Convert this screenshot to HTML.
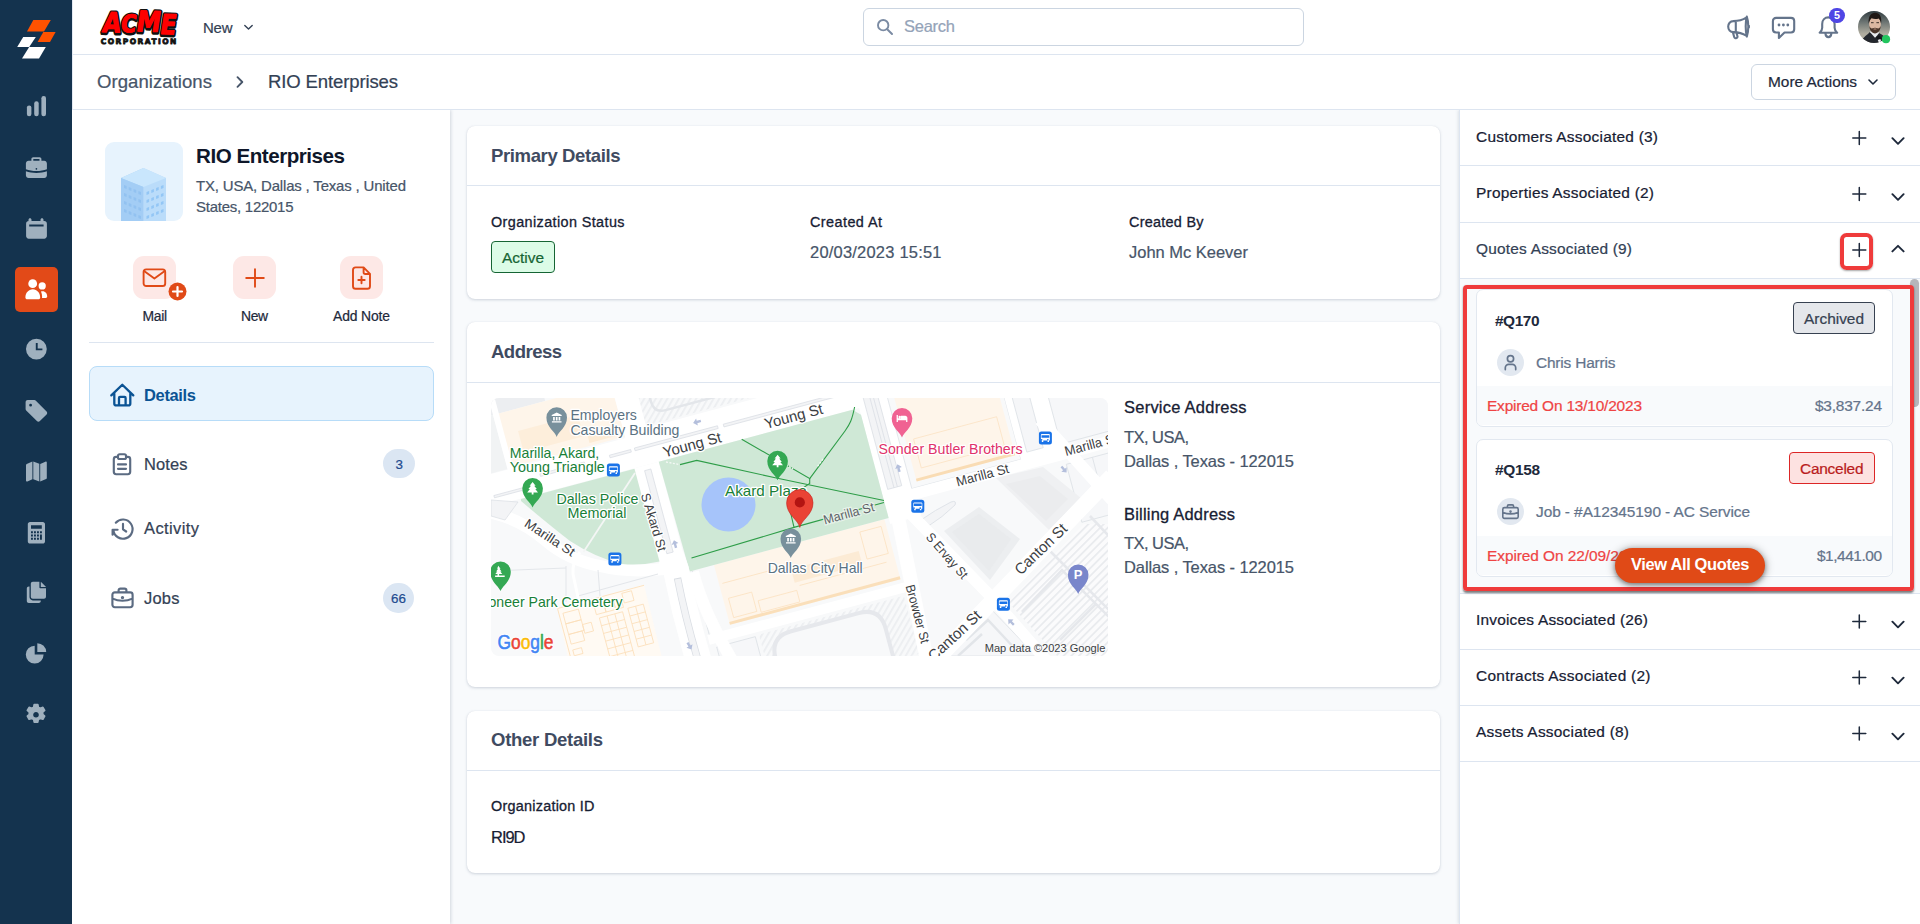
<!DOCTYPE html>
<html lang="en"><head><meta charset="utf-8"><title>RIO Enterprises - Organizations</title>
<style>
*{box-sizing:border-box;margin:0;padding:0}
html,body{width:1920px;height:924px;overflow:hidden;background:#fff}
body{font-family:"Liberation Sans",sans-serif;color:#1e293b;position:relative}
.a{position:absolute}
.t{position:absolute;white-space:nowrap;line-height:1}
svg{display:block;overflow:visible}
.card{background:#fff;border-radius:8px;box-shadow:0 1px 3px rgba(100,116,139,.28),0 0 1px rgba(100,116,139,.15)}
.qc{background:#fff;border:1px solid #e2e8f0;border-radius:7px;overflow:hidden}
.qf{position:absolute;left:0;width:100%;background:#f8fafc}
</style></head>
<body>
<!-- page backgrounds -->
<div class="a" style="left:72px;top:110px;width:1848px;height:814px;background:#f8fafc"></div>
<!-- header -->
<!-- left panel -->
<div class="a" style="left:72px;top:110px;width:378px;height:814px;background:#fff;box-shadow:1px 0 3px rgba(100,116,139,.25)"></div>
<!-- right panel -->
<div class="a" style="left:1459px;top:110px;width:461px;height:814px;background:#fff;border-left:1px solid #dde5f0;box-shadow:-1px 0 3px rgba(100,116,139,.18)"></div>
<!-- header bars (after panels so shadows do not bleed) -->
<div class="a" style="left:72px;top:0;width:1848px;height:55px;background:#fff;border-bottom:1px solid #dde5f0"></div>
<div class="a" style="left:72px;top:55px;width:1848px;height:55px;background:#fff;border-bottom:1px solid #dde5f0"></div>
<!-- sidebar -->
<div class="a" style="left:0;top:0;width:72px;height:924px;background:#14334e"></div>
<!-- centre cards -->
<div class="a card" style="left:467px;top:126px;width:973px;height:173px"></div>
<div class="a" style="left:467px;top:185px;width:973px;height:1px;background:#dde5f0"></div>
<div class="a card" style="left:467px;top:322px;width:973px;height:365px"></div>
<div class="a" style="left:467px;top:382px;width:973px;height:1px;background:#dde5f0"></div>
<div class="a card" style="left:467px;top:711px;width:973px;height:162px"></div>
<div class="a" style="left:467px;top:770px;width:973px;height:1px;background:#dde5f0"></div>
<div class="a" style="left:72px;top:0;width:1px;height:110px;background:#e3e9f2"></div>
<!-- sidebar icons -->
<svg class="a" style="left:0;top:0" width="72" height="924" viewBox="0 0 72 924">
 <!-- logo -->
 <polygon points="33.3,20 50.8,20 44,31.4 27,31.4" fill="#ff5200"/>
 <polygon points="43.3,32 55.6,32 50,42 37.6,42" fill="#ff5200"/>
 <polygon points="23.2,37 35.8,37 29.2,47 17.2,47" fill="#fff"/>
 <polygon points="29.2,47 45.8,47 39,58.6 22,58.6" fill="#fff"/>
 <g fill="#9fb0be">
  <!-- bars -->
  <rect x="26.9" y="105.4" width="4.5" height="10.8" rx="2.2"/>
  <rect x="34.2" y="101.2" width="4.5" height="15" rx="2.2"/>
  <rect x="41.4" y="96" width="4.6" height="20.2" rx="2.2"/>
  <!-- briefcase -->
  <path d="M31.400 161.200v-2.200c0-1 .800-1.800 1.800-1.800h6.400c1 0 1.800.800 1.800 1.800v2.200h-1.900v-1.800c0-.200-.100-.300-.300-.300h-5.600c-.200 0-.300.100-.300.300v1.800z"/>
  <path d="M28.600 160.800h15.600c1.500 0 2.700 1.200 2.700 2.700v5.800c-3 1.200-6.700 1.800-10.500 1.800s-7.500-.600-10.500-1.800v-5.800c0-1.500 1.200-2.700 2.700-2.700zm7.800 7.200a.85.85 0 1 0 0 1.700.85.85 0 0 0 0-1.700z" fill-rule="evenodd"/>
  <path d="M25.900 171.300c3.100 1.100 6.700 1.700 10.500 1.700s7.400-.600 10.500-1.700v4c0 1.500-1.200 2.700-2.700 2.700H28.600c-1.500 0-2.700-1.200-2.700-2.700z"/>
  <!-- calendar -->
  <path d="M30 218.300c.800 0 1.500.700 1.500 1.500v1.300h9v-1.300c0-.800.700-1.500 1.500-1.500s1.500.700 1.500 1.500v1.300h.800c1.500 0 2.600 1.200 2.600 2.600v12.400c0 1.500-1.200 2.600-2.600 2.600H28.700c-1.500 0-2.600-1.200-2.600-2.600v-12.400c0-1.500 1.200-2.600 2.600-2.600h-.200v-1.300c0-.800.700-1.500 1.500-1.500zM29.200 224.600v2h14.400v-2z" fill-rule="evenodd"/>
 </g>
 <!-- active -->
 <rect x="15" y="267" width="43" height="45" rx="5" fill="#e24a18"/>
 <g fill="#fff">
  <circle cx="32.700" cy="283.700" r="4.400"/>
  <path d="M25.400 297.500c0-4.600 3.200-8.200 7.400-8.200s7.400 3.600 7.400 8.200c0 1-.8 1.800-1.800 1.800H27.200c-1 0-1.800-.8-1.800-1.800z"/>
  <circle cx="42.200" cy="285.900" r="3.600"/>
  <path d="M41 291.500c.5-.2 1.100-.3 1.700-.3 2.600 0 4.500 2.400 4.500 5.400 0 .8-.6 1.400-1.400 1.400h-3.800c.1-.4.100-.8.100-1.200 0-2-.4-3.800-1.100-5.300z"/>
 </g>
 <g fill="#9fb0be">
  <!-- clock -->
  <path d="M36.400 338.700a10.400 10.400 0 1 0 0 20.800 10.400 10.400 0 0 0 0-20.800zm-.600 4.300h1.900v5.400h4.700v1.900h-6.600z" fill-rule="evenodd"/>
  <!-- tag -->
  <path d="M25.600 402.200c0-1.200 1-2.100 2.100-2.100h6.700c.600 0 1.100.200 1.500.600l10.700 10.700c.800.800.800 2.200 0 3l-6.700 6.700c-.800.800-2.200.800-3 0l-10.700-10.700c-.400-.400-.600-.900-.600-1.500zm5 1.600a1.400 1.400 0 1 0 0 2.800 1.400 1.400 0 0 0 0-2.800z" fill-rule="evenodd"/>
  <!-- map -->
  <path d="M26 465.200c0-.500.300-.900.700-1.100l5.700-2.500v17.600l-5 2.200c-.700.300-1.400-.200-1.400-.900zM33.300 461.500l6 2.300v17.800l-6-2.300zM40.200 464l5.200-2.300c.700-.300 1.400.200 1.400.900v15.300c0 .500-.300.900-.700 1.100l-5.900 2.600z"/>
  <!-- calculator -->
  <path d="M30 522h12.800c1.200 0 2.200 1 2.200 2.200v17.200c0 1.200-1 2.200-2.200 2.200H30c-1.200 0-2.200-1-2.200-2.200v-17.200c0-1.200 1-2.200 2.200-2.200zm1 3.200v3.600h10.800v-3.600zM31 531.300v1.900h1.900v-1.900zm3 0v1.900h1.900v-1.900zm3 0v1.900h1.900v-1.900zm3 0v1.900h1.900v-1.900zM31 534.500v1.900h1.900v-1.900zm3 0v1.900h1.900v-1.900zm3 0v1.900h1.900v-1.900zm3 0v5.200h1.900v-5.200zM31 537.800v1.900h1.900v-1.900zm3 0v1.900h1.900v-1.900zm3 0v1.900h1.900v-1.900z" fill-rule="evenodd"/>
  <!-- copy -->
  <path d="M32.800 581.800h6.600v5.400c0 .600.500 1.100 1.100 1.100h5.500v8.400c0 1.100-.900 2-2 2H32.800c-1.100 0-2-.900-2-2v-12.900c0-1.100.900-2 2-2zM40.800 581.900c.200.100.400.200.600.400l4.200 4.200c.200.200.300.400.400.600h-5.200z"/>
  <path d="M26.800 588.400c0-1.100.900-2 2-2h.700v10.700c0 1.800 1.500 3.300 3.300 3.300h8v.700c0 1.100-.900 2-2 2h-10c-1.100 0-2-.900-2-2z"/>
  <!-- pie -->
  <path d="M34.700 645.700a8.900 8.900 0 1 0 8.900 8.900h-8.900z"/>
  <path d="M37.300 643.200a8.900 8.900 0 0 1 8.900 8.900h-8.900z"/>
  <!-- gear -->
  <path d="M34.200 704.500h3.600l.6 2.700c.7.200 1.300.6 1.900 1l2.600-.9 1.800 3.100-2 1.800c.1.700.1 1.500 0 2.200l2 1.800-1.800 3.100-2.600-.9c-.600.400-1.200.8-1.900 1l-.6 2.700h-3.600l-.6-2.700c-.7-.2-1.300-.600-1.900-1l-2.600.9-1.800-3.100 2-1.800c-.1-.700-.1-1.500 0-2.200l-2-1.800 1.800-3.100 2.600.9c.6-.4 1.200-.8 1.900-1zm1.800 6.600a3.600 3.600 0 1 0 0 7.200 3.600 3.600 0 0 0 0-7.200z" fill-rule="evenodd" stroke="#9fb0be" stroke-width="1.6" stroke-linejoin="round"/>
 </g>
</svg>
<!-- ACME logo -->
<svg class="a" style="left:96px;top:6px" width="86" height="42" viewBox="0 0 86 42">
 <g font-family="'DejaVu Sans','Liberation Sans',sans-serif" font-weight="700">
  <g transform="translate(2.500,25.800) skewX(-7) rotate(1.600)">
   <text x="3.600" y="1" font-size="27.600" fill="#111" stroke="#111" stroke-width="4" stroke-linejoin="round" textLength="74" lengthAdjust="spacingAndGlyphs"><tspan>A</tspan><tspan font-size="24.500" dy="-.5">C</tspan><tspan font-size="28.500" dy="-1.200">M</tspan><tspan dy="2.200">E</tspan></text>
   <text x="3" y="0" font-size="27.600" fill="#f00" stroke="#111" stroke-width="3.200" stroke-linejoin="round" paint-order="stroke" textLength="74" lengthAdjust="spacingAndGlyphs"><tspan>A</tspan><tspan font-size="24.500" dy="-.5">C</tspan><tspan font-size="28.500" dy="-1.200">M</tspan><tspan dy="2.200">E</tspan></text>
   <text x="3" y="0" font-size="27.600" fill="#f00" stroke="#f00" stroke-width=".9" stroke-linejoin="round" textLength="74" lengthAdjust="spacingAndGlyphs"><tspan>A</tspan><tspan font-size="24.500" dy="-.5">C</tspan><tspan font-size="28.500" dy="-1.200">M</tspan><tspan dy="2.200">E</tspan></text>
  </g>
  <text x="4.800" y="37.800" font-size="7.500" fill="#111" stroke="#111" stroke-width=".8" stroke-linejoin="round" textLength="75.500" lengthAdjust="spacing">CORPORATION</text>
 </g>
</svg>
<!-- New chevron -->
<svg class="a" style="left:243px;top:23px" width="11" height="9" viewBox="0 0 11 9"><path d="M1.800 2.500l3.700 3.600 3.700-3.600" fill="none" stroke="#334155" stroke-width="1.400" stroke-linecap="round" stroke-linejoin="round"/></svg>
<!-- search -->
<div class="a" style="left:863px;top:8px;width:441px;height:38px;border:1px solid #cbd5e1;border-radius:6px;background:#fff"></div>
<svg class="a" style="left:876px;top:18px" width="18" height="18" viewBox="0 0 18 18"><circle cx="7.200" cy="7.200" r="5.200" fill="none" stroke="#7b8ba3" stroke-width="1.900"/><path d="M11.200 11.200l4.800 4.800" stroke="#7b8ba3" stroke-width="2" stroke-linecap="round"/></svg>
<!-- right icons -->
<svg class="a" style="left:1724px;top:12px" width="30" height="30" viewBox="0 0 30 30" fill="none" stroke="#64748b" stroke-width="2.100" stroke-linecap="round" stroke-linejoin="round">
 <path d="M9.400 9.100C6.200 9.100 4.200 11.600 4.200 14.600S6.200 20.100 9.400 20.100M9.400 9.100C13.800 9 18.600 7.900 22.300 5.600M9.400 20.100C13.800 20.200 18.600 21.300 22.300 23.600M22.800 4.600c1 2.800 1.500 6.200 1.500 10s-.5 7.200-1.500 10c-.7-2.800-1.100-6.200-1.100-10s.4-7.200 1.100-10zM11.800 9.300v10.800M8.900 20.400l1.300 4.600c.3 1 1.300 1.500 2.200 1.100.9-.4 1.300-1.300 1-2.200l-.9-3M24.900 13.700v1.800"/>
</svg>
<svg class="a" style="left:1769px;top:13px" width="30" height="28" viewBox="0 0 30 28" fill="none" stroke="#64748b" stroke-width="2.100" stroke-linecap="round" stroke-linejoin="round">
 <path d="M7.100 4.900h14.900c1.800 0 3.200 1.400 3.200 3.200v8.200c0 1.800-1.400 3.200-3.200 3.200h-6.500l-5.600 5.400v-5.400H7.100c-1.800 0-3.200-1.400-3.200-3.200V8.100c0-1.800 1.400-3.200 3.200-3.200z"/>
 <g stroke="none" fill="#64748b"><circle cx="10" cy="12" r="1.400"/><circle cx="14.400" cy="12" r="1.400"/><circle cx="18.800" cy="12" r="1.400"/></g>
</svg>
<svg class="a" style="left:1815px;top:13px" width="28" height="28" viewBox="0 0 28 28" fill="none" stroke="#64748b" stroke-width="2.100" stroke-linecap="round" stroke-linejoin="round">
 <path d="M13.400 4.400c-3.600 0-6.200 2.800-6.200 6.600v3.800c0 2-1 3.600-2.600 4.900h17.600c-1.600-1.300-2.600-2.900-2.600-4.900v-3.800c0-3.800-2.600-6.600-6.200-6.600zM10.400 20.300c.2 2.200 1.400 3.800 3 3.800s2.800-1.600 3-3.800"/>
</svg>
<div class="a" style="left:1829.200px;top:7.750px;width:15.400px;height:15.400px;border-radius:50%;background:#4f46e5"></div>
<!-- avatar -->
<svg class="a" style="left:1858px;top:10.800px" width="34" height="34" viewBox="0 0 34 34">
 <defs><clipPath id="avc"><circle cx="16" cy="16" r="16"/></clipPath>
 <linearGradient id="avg" x1="0" y1="0" x2="0" y2="1"><stop offset="0" stop-color="#2f3b3f"/><stop offset=".35" stop-color="#6d7573"/><stop offset=".7" stop-color="#aeab9e"/><stop offset="1" stop-color="#b9b5a8"/></linearGradient></defs>
 <g clip-path="url(#avc)">
  <rect width="32" height="32" fill="url(#avg)"/>
  <path d="M3.500 29.500c2.500-3.500 6-5.800 8.400-8.400l5.300 3.400 3.800-2.400c3.600 2 7.500 4.600 9.500 8.400l-4 4H6z" fill="#24272d"/>
  <path d="M11.900 21.100l5.300 5.900 3.800-4.900-1.400-2.400h-6z" fill="#e9ecef"/>
  <path d="M17.200 26.500l3.800-2.200 3.600 3.600-3.200 1.200z" fill="#15171b"/>
  <path d="M19.800 29l2.600-1 1 3.500h-2.600z" fill="#eef0f2"/>
  <ellipse cx="17" cy="13" rx="5.900" ry="7.800" fill="#dcb8a2"/>
  <path d="M10.700 12.800c-.8-7.400 2.300-11 6.500-11s6.900 3.600 5.900 11c-.6-2.600-1.200-4.400-2.400-5.400-2 .8-5 .8-7.200-.2-1.300 1-2.200 3-2.800 5.600z" fill="#1f1815"/>
  <path d="M11.400 14.800c.1 4.800 2.600 7.600 5.600 7.600s5.600-2.800 5.700-7.600c-.7 1.800-1.500 2.600-2.600 2.800-.9-.7-2-.9-3.100-.9s-2.200.2-3.100.9c-1.100-.2-1.800-1-2.500-2.800z" fill="#4a362b"/>
  <path d="M15.200 17.900c.5-.4 1.100-.5 1.800-.5s1.300.1 1.800.5c-.4.500-1 .7-1.800.7s-1.400-.2-1.800-.7z" fill="#b88d7c"/>
  <path d="M13 11.700h2.600M18.400 11.700H21" stroke="#2a211d" stroke-width=".9"/>
 </g>
 <circle cx="28" cy="28.200" r="4.100" fill="#22c55e"/>
</svg>
<!-- breadcrumb chevron -->
<svg class="a" style="left:233px;top:74px" width="14" height="16" viewBox="0 0 14 16"><path d="M4.500 3.200l4.800 4.800-4.800 4.800" fill="none" stroke="#475569" stroke-width="1.900" stroke-linecap="round" stroke-linejoin="round"/></svg>
<!-- more actions -->
<div class="a" style="left:1751px;top:64px;width:145px;height:36px;border:1px solid #cbd5e1;border-radius:6px;background:#fff"></div>
<svg class="a" style="left:1866px;top:77px" width="14" height="10" viewBox="0 0 14 10"><path d="M3 3l4 4 4-4" fill="none" stroke="#1e293b" stroke-width="1.600" stroke-linecap="round" stroke-linejoin="round"/></svg>
<!-- org avatar -->
<svg class="a" style="left:105px;top:142px" width="78" height="79" viewBox="0 0 78 79">
 <defs><clipPath id="oac"><rect width="78" height="79" rx="9"/></clipPath></defs>
 <g clip-path="url(#oac)">
  <rect width="78" height="79" fill="#e7f3fd"/>
  <polygon points="16,36 38.500,26 38.500,80 16,80" fill="#a9d2f7"/>
  <polygon points="38.500,26 61,36 61,80 38.500,80" fill="#badcfa"/>
  <polygon points="16,36 38.500,26 61,36 38.500,45" fill="#c9e6fd"/>
  <polygon points="16,36 38.500,45 38.500,80 16,80" fill="#a3cdf5"/>
  <g fill="#8fc0f0" opacity=".85">
   <path d="M19 43l2.600 1v3l-2.600-1zM23.800 45l2.600 1v3l-2.600-1zM28.600 47l2.600 1v3l-2.600-1zM33.400 49l2.600 1v3l-2.600-1zM19 51l2.600 1v3l-2.600-1zM23.800 53l2.600 1v3l-2.600-1zM28.600 55l2.600 1v3l-2.600-1zM33.400 57l2.600 1v3l-2.600-1zM19 59l2.600 1v3l-2.600-1zM23.800 61l2.600 1v3l-2.600-1zM28.600 63l2.600 1v3l-2.600-1zM33.400 65l2.600 1v3l-2.600-1zM19 67l2.600 1v3l-2.600-1zM23.800 69l2.600 1v3l-2.600-1zM28.600 71l2.600 1v3l-2.600-1zM33.400 73l2.600 1v3l-2.600-1z"/>
  </g>
  <g fill="#93c6f5">
   <path d="M41.500 50l2.600-1v3l-2.600 1zM46.300 48l2.600-1v3l-2.600 1zM51.100 46l2.600-1v3l-2.600 1zM55.900 44l2.600-1v3l-2.600 1zM41.500 58l2.600-1v3l-2.600 1zM46.300 56l2.600-1v3l-2.600 1zM51.100 54l2.600-1v3l-2.600 1zM55.900 52l2.600-1v3l-2.600 1zM41.500 66l2.600-1v3l-2.600 1zM46.300 64l2.600-1v3l-2.600 1zM51.100 62l2.600-1v3l-2.600 1zM55.900 60l2.600-1v3l-2.600 1zM41.500 74l2.600-1v3l-2.600 1zM46.300 72l2.600-1v3l-2.600 1zM51.100 70l2.600-1v3l-2.600 1zM55.900 68l2.600-1v3l-2.600 1z"/>
  </g>
 </g>
</svg>
<!-- action buttons -->
<div class="a" style="left:133px;top:256px;width:43px;height:43px;border-radius:11px;background:#fde8e6"></div>
<div class="a" style="left:233px;top:256px;width:43px;height:43px;border-radius:11px;background:#fde8e6"></div>
<div class="a" style="left:340px;top:256px;width:43px;height:43px;border-radius:11px;background:#fde8e6"></div>
<svg class="a" style="left:142px;top:267px" width="26" height="22" viewBox="0 0 26 22" fill="none" stroke="#e04a17" stroke-width="1.900" stroke-linecap="round" stroke-linejoin="round">
 <rect x="1.600" y="2.400" width="21.600" height="16.600" rx="2.600"/><path d="M2.400 4.200l10 7.400 10-7.400"/>
</svg>
<svg class="a" style="left:167.600px;top:282.100px" width="19" height="19" viewBox="0 0 19 19"><circle cx="9.500" cy="9.500" r="9" fill="#e04a17"/><path d="M9.500 5v9M5 9.500h9" stroke="#fff" stroke-width="2.200" stroke-linecap="round"/></svg>
<svg class="a" style="left:244px;top:267px" width="22" height="22" viewBox="0 0 22 22"><path d="M11 2.200v17.600M2.200 11h17.600" stroke="#e04a17" stroke-width="1.900" stroke-linecap="round"/></svg>
<svg class="a" style="left:350px;top:265px" width="24" height="26" viewBox="0 0 24 26" fill="none" stroke="#e04a17" stroke-width="1.900" stroke-linecap="round" stroke-linejoin="round">
 <path d="M5.600 2.400h8l6.400 6.400v12.400c0 1.400-1.200 2.600-2.600 2.600H5.600c-1.400 0-2.600-1.200-2.600-2.600V5c0-1.400 1.200-2.600 2.600-2.600zM13.600 2.600v4.600c0 1 .800 1.800 1.800 1.800h4.400M11.500 11.800v6.400M8.300 15h6.400"/>
</svg>
<div class="a" style="left:89px;top:342px;width:345px;height:1px;background:#dde5f0"></div>
<!-- details tab -->
<div class="a" style="left:89px;top:366px;width:345px;height:55px;border-radius:8px;background:#e7f3fd;border:1px solid #b7dcf8"></div>
<svg class="a" style="left:110.300px;top:383px" width="25" height="24" viewBox="0 0 25 24" fill="none" stroke="#0b5394" stroke-width="2.300" stroke-linecap="round" stroke-linejoin="round">
 <path d="M1.300 12.400L12.300 1.700l11 10.700M4.300 10.200v10.200c0 1.100.9 2 2 2h12c1.100 0 2-.9 2-2V10.200M9 22.200v-7.300c0-.6.500-1 1-1h4.600c.6 0 1 .5 1 1v7.300"/>
</svg>
<!-- notes -->
<svg class="a" style="left:110px;top:452px" width="24" height="25" viewBox="0 0 24 25" fill="none" stroke="#5b6b82" stroke-width="2.150" stroke-linecap="round" stroke-linejoin="round">
 <path d="M8 4.800H6.200c-1.300 0-2.400 1.100-2.400 2.400v12.600c0 1.300 1.100 2.400 2.400 2.400h11.600c1.300 0 2.400-1.100 2.400-2.400V7.200c0-1.300-1.100-2.400-2.400-2.400H16M9.600 2.200h4.800c.900 0 1.600.700 1.600 1.600v1.600c0 .900-.700 1.600-1.600 1.600H9.600C8.700 7 8 6.300 8 5.400V3.800c0-.900.700-1.600 1.600-1.600zM8 12.400h8M8 16.800h8"/>
</svg>
<div class="a" style="left:383px;top:449px;width:32px;height:29px;border-radius:15px;background:#dbe6f3"></div>
<!-- activity -->
<svg class="a" style="left:110.200px;top:517.400px" width="25" height="25" viewBox="0 0 25 25" fill="none" stroke="#5b6b82" stroke-width="2.150" stroke-linecap="round" stroke-linejoin="round">
 <path d="M3.400 13.600a9.600 9.600 0 1 0 2.400-7.400M2.600 18.200v-5h5M13 7.400v5.400l3.200 2.200" transform="translate(0,-.5)"/>
</svg>
<!-- jobs -->
<svg class="a" style="left:110px;top:586px" width="25" height="24" viewBox="0 0 25 24" fill="none" stroke="#5b6b82" stroke-width="2.150" stroke-linecap="round" stroke-linejoin="round">
 <path d="M4.800 6.400h15.400c1.300 0 2.400 1.100 2.400 2.400v10c0 1.300-1.100 2.400-2.400 2.400H4.800c-1.300 0-2.400-1.100-2.400-2.400v-10c0-1.300 1.100-2.400 2.400-2.400zM8.600 6.200V4.400c0-1 .800-1.800 1.800-1.800h4.200c1 0 1.800.800 1.800 1.800v1.800M2.600 12.600c3 1.400 6.400 2.100 9.900 2.100s6.900-.700 9.900-2.100"/>
 <circle cx="12.500" cy="11.600" r=".6" fill="#5b6b82"/>
</svg>
<div class="a" style="left:383px;top:583px;width:31px;height:30px;border-radius:15px;background:#dbe6f3"></div>
<!-- active badge -->
<div class="a" style="left:491px;top:241px;width:64px;height:32px;border-radius:4px;background:#dcfce7;border:1px solid #166534"></div>
<!-- map -->
<svg class="a" style="left:491px;top:398px" width="617" height="258" viewBox="491 398 617 258" font-family="'Liberation Sans',sans-serif">
 <defs>
  <clipPath id="mclip"><rect x="491" y="398" width="617" height="258" rx="8"/></clipPath>
  <pattern id="hat" width="5" height="5" patternUnits="userSpaceOnUse" patternTransform="rotate(45)"><rect width="5" height="5" fill="#f8f9fa"/><rect width="1.800" height="5" fill="#eceef1"/></pattern>
  <pattern id="hat2" width="5.400" height="5.400" patternUnits="userSpaceOnUse" patternTransform="rotate(-45)"><rect width="5.400" height="5.400" fill="#fbfbfc"/><rect width="5.400" height="1.700" fill="#e9ebee"/></pattern>
  <g id="bus"><rect x="-6.500" y="-6.500" width="13" height="13" rx="2.500" fill="#1a73e8"/><path d="M-3.600-3.900h7.200c.500 0 .900.400.900.900v5.400h-9v-5.400c0-.500.400-.900.900-.900zm-.300 1.200v2.500h7.800v-2.500zm.100 3.700a.8.800 0 1 0 .100 1.600.8.800 0 0 0-.100-1.600zm6.200 0a.8.800 0 1 0 .100 1.600.8.800 0 0 0-.100-1.600zM-3.600 2.400h1.500v1.500h-1.500zm5.700 0h1.500v1.500h-1.500z" fill="#fff" fill-rule="evenodd"/></g>
  <path id="pin" d="M0 19.300C-1.500 14.500-10.300 9.600-10.300 0A10.300 10.300 0 0 1 10.300 0C10.300 9.600 1.500 14.500 0 19.300z"/>
 </defs>
 <g clip-path="url(#mclip)">
  <rect x="491" y="398" width="617" height="258" fill="#f8f9fa"/>
  <!-- grid-aligned layer -->
  <g transform="translate(658.750,461.700) rotate(-15)">
   <!-- blocks -->
   <rect x="-200" y="-140" width="106" height="52" fill="#eceef1"/>
   <rect x="-143" y="-88" width="117" height="55" fill="#fef5ea"/>
   <rect x="-128" y="-66" width="62" height="22" fill="#fdeedb"/>
   <rect x="-62" y="-45" width="32" height="9" fill="#fcebd5"/>
   <rect x="-200" y="-88" width="52" height="56" fill="#f1f3f4"/>
   <rect x="-3" y="-150" width="160" height="112" fill="url(#hat)"/>
   <path d="M8-120v60q0 12 12 12h140" fill="none" stroke="#e3e6ea" stroke-width="2.500"/>
   <!-- roads -->
   <rect x="-400" y="-31.500" width="1100" height="31.500" fill="#fff"/><rect x="-26" y="-36" width="700" height="6" fill="#fff"/>
   <rect x="-26" y="-150" width="23" height="120" fill="#fff"/>
   <rect x="-148" y="-150" width="6" height="120" fill="#fff"/>
   <rect x="-26" y="0" width="26" height="104" fill="#fff"/>
   <g fill="#f3f4f6" stroke="#d9dde3" stroke-width=".7">
    <rect x="-118" y="-19" width="46" height="2.600"/><rect x="-46" y="-19" width="22" height="2.600"/>
    <rect x="-20" y="-19.500" width="86" height="2.800"/><rect x="72" y="-19.500" width="118" height="2.800"/>
    <rect x="-168" y="-10" width="46" height="2.400"/>
    <rect x="-16" y="5" width="6.500" height="86"/>
   </g>
   <!-- east of plaza -->
   <rect x="207.500" y="-80" width="32" height="200" fill="#fff"/>
   <g fill="#f3f4f6" stroke="#d9dde3" stroke-width=".7"><rect x="214" y="-70" width="14.500" height="156"/><path d="M220.500-70v156M224-70v156" fill="none"/></g>
   <rect x="237.500" y="-80" width="113" height="171.500" fill="#f8f9fa" stroke="#dfe3e8" stroke-width=".8"/>
   <rect x="244" y="-80" width="102" height="166" fill="#fef5ea"/>
   <rect x="244" y="83" width="102" height="3" fill="#f9dcb4"/>
   <rect x="262" y="-46" width="64" height="18" fill="none" stroke="#fbe4c6" stroke-width=".8"/>
   <rect x="252" y="44" width="86" height="30" fill="none" stroke="#fbe4c6" stroke-width=".8"/>
   <rect x="350.500" y="-80" width="46" height="172" fill="#fff"/>
   <rect x="358" y="-80" width="17" height="166" fill="#f5f6f8" stroke="#dde1e6" stroke-width=".8"/>
   <rect x="207.500" y="91.500" width="500" height="11.500" fill="#fff"/>
   <!-- NE blocks -->
   <rect x="393" y="-80" width="80" height="167" fill="#f6f7f9" stroke="#dde1e6" stroke-width=".8"/>
   <rect x="398" y="-30" width="30" height="24" fill="#eceef1"/><rect x="430" y="-60" width="40" height="50" fill="#eceef1"/>
   <rect x="398" y="-3" width="72" height="1" fill="#dde1e6"/>
   <path d="M396-62h10q10 0 10-10v-10" fill="none" stroke="#e3e6ea" stroke-width="3"/>
   <!-- SE of marilla: blocks -->
   <rect x="393" y="108" width="90" height="60" fill="#f6f7f9" stroke="#dde1e6" stroke-width=".8"/>
   <path d="M420 108v40M448 108v60" stroke="#dde1e6" stroke-width=".8"/>
   <!-- city hall -->
   <rect x="26.600" y="114" width="176.500" height="62" fill="#fef5ea"/>
   <rect x="26.600" y="173" width="176.500" height="3" fill="#fadfba"/>
   <rect x="100" y="138" width="70" height="14" fill="#fcebd5"/>
   <g fill="none" stroke="#fbe2c2" stroke-width=".8"><rect x="32" y="150" width="24" height="20"/><rect x="60" y="160" width="40" height="12"/><rect x="176" y="120" width="22" height="28"/><path d="M30 134h70M104 156h90"/></g>
   <rect x="2" y="180" width="215" height="10" fill="#fff"/>
   <path d="M4 114v66" stroke="#dde1e6" stroke-width=".8" fill="none"/>
   <!-- parking structure south of city hall -->
   <rect x="52" y="193" width="150" height="60" fill="url(#hat)"/>
   <path d="M62 260v-40q0-22 22-22h70q22 0 22 22v40z" fill="#f8f9fa" stroke="#e6e8ec" stroke-width="4"/>
   <rect x="8" y="194" width="40" height="50" fill="#f6f7f9" stroke="#dde1e6" stroke-width=".8"/>
   <!-- plaza -->
   <polygon points="0,0 200.500,0 207.500,7 207.500,114 1.500,114" fill="#cfe8d6"/>
  </g>
  <!-- non-grid: SE quadrant -->
  <polygon points="944,531 979,507 1020,539 990,580" fill="#eceef0"/>
  <polygon points="952,532 979,514 1011,539 989,571" fill="#e9ebed"/>
  <polygon points="996,478 1043,467 1081,498 1049,530" fill="#eff0f2"/>
  <polygon points="1006,484 1040,476 1068,499 1046,521" fill="#ebecee"/>
  <path d="M921 520q14-10 30-18q6-2 4 3q-12 12-28 22q-8 3-6-7z" fill="#f3f4f6" stroke="#dde1e6" stroke-width=".9"/>
  <!-- parking lot hatched -->
  <polygon points="1008,602 1084,524 1120,524 1120,670 1070,670" fill="url(#hat2)"/>
  <g stroke="#e6e8ec" stroke-width="2.600" fill="none"><path d="M1050 551l60 60M1022 612l40-42 50 50M1090 516l30 32M1060 640l36-36"/></g>
  <polygon points="975,622 990,608 1036,656 948,656" fill="#f6f7f9" stroke="#dde1e6" stroke-width=".8"/>
  <path d="M966 640l22-20 30 32M958 656l24-22" stroke="#e2e5e9" stroke-width="2.500" fill="none"/>
  <!-- streets -->
  <path d="M893 498L899.400 524L926.500 658" stroke="#fff" stroke-width="14" fill="none"/>
  <path d="M906 509L987.700 593.200L1046 660" stroke="#fff" stroke-width="11.500" fill="none" stroke-linejoin="round"/>
  <path d="M936 660L1066 524L1112 476" stroke="#fff" stroke-width="16" fill="none"/>
  <path d="M1040 420L1112 500" stroke="#fff" stroke-width="12" fill="none"/>
  <!-- lower-left -->
  <polygon points="557.500,608.500 644,585 662,658 568,658" fill="#fffaf3"/>
  <g transform="translate(557.500,608.500) rotate(-15)" fill="none" stroke="#fbdfba" stroke-width=".8">
   <path d="M0 0h89.600M0 0v70"/>
   <path d="M4 6h16v11h-16zM4 17h16v11h-16zM20 22h9v9h-9zM4 28h14v10h-14zM4 44h9v6h-9z"/>
   <path d="M36 8h10v8h-10zM46 8h10v8h-10zM56 8h8v8h-8z"/>
   <path d="M38 20h24v48h-24zM38 28h24M38 36h24M38 44h24M38 52h24M38 60h24M46 20v48M54 20v48"/>
   <path d="M68 18h16v40h-16zM68 26h16M68 34h16M68 42h16M68 50h16M76 18v40M66 2h10v10h-10z"/>
  </g>
  <path d="M491 512.500Q522 520 545 540T600 566Q628 573 664 569" stroke="#fff" stroke-width="12" fill="none"/>
  <path d="M671 556L676 570C682 600 690 632 699 662" stroke="#fff" stroke-width="26" fill="none"/>
  <path d="M693 572C700 600 716 634 732 660" stroke="#fff" stroke-width="12" fill="none"/>
  <path d="M677.500 578C683 606 690 634 698.500 662" stroke="#d9dde3" stroke-width="7.400" fill="none"/>
  <path d="M677.700 579C683 606 690 634 698.500 662" stroke="#f3f4f6" stroke-width="6" fill="none"/>
  <path d="M580 552q-8 10-7 22l6 28M566 566v36M598 570l2 26M491 571l75-3M578 596l80-22" stroke="#e3e6ea" stroke-width="1" fill="none"/>
  <path d="M580 552q-8 10-7 22l6 28" stroke="#fff" stroke-width="3" fill="none"/>
  <polygon points="491,500 518,502 505,520 491,516" fill="#f3f4f6" stroke="#dde1e6" stroke-width=".8"/>
  <!-- police memorial green -->
  <path d="M521 499L634.500 468.800L659.500 561.500Q640 566 622 564Q596 558 570 541Q548 524 521 501z" fill="#cfe8d6"/>
  <path d="M635 473L583.500 552" stroke="#f4f6f5" stroke-width="1.800"/>
  <!-- green paths -->
  <g stroke="#2e9d48" stroke-width="1.100" fill="none">
   <path d="M680 464.600L696.700 460.400L777.500 478.300L884 500.500"/>
   <path d="M741.700 439.200L809.700 478.600V483.500L794 494"/>
   <path d="M854.600 407C852 420 850 424 845 431L809.700 478.600"/>
   <path d="M691.500 558L794 527.400L884 502.500M790 510L794 527.400"/>
  </g>
  <path d="M666 462l14 2.600M783 463l10 6M823 459l-6 8" stroke="#f4f8f5" stroke-width="1.300" stroke-dasharray="2 1.500"/>
  <circle cx="728.500" cy="504.500" r="27" fill="#a6c4fa"/>
  <!-- arrows -->
  <g fill="#b4bfdc">
   <path d="M0-4l3.500 4h-2.300v4h-2.400v-4h-2.300z" transform="translate(675,544) rotate(-15)"/>
   <path d="M0-4l3.500 4h-2.300v4h-2.400v-4h-2.300z" transform="translate(898.500,468) rotate(-15)"/>
   <path d="M0-4l3.500 4h-2.300v4h-2.400v-4h-2.300z" transform="translate(689.500,646) rotate(150)"/>
   <path d="M0-4l3.500 4h-2.300v4h-2.400v-4h-2.300z" transform="translate(1064,469.500) rotate(140)"/>
   <path d="M0-4l3.500 4h-2.300v4h-2.400v-4h-2.300z" transform="translate(697,422) rotate(-105)"/>
   <path d="M0-4l3.500 4h-2.300v4h-2.400v-4h-2.300z" transform="translate(1011,622) rotate(-45)"/>
  </g>
  <!-- road labels -->
  <g fill="#3c4043" stroke="#fff" stroke-width="2.600" paint-order="stroke" stroke-linejoin="round" text-anchor="middle">
   <text transform="translate(692,444.500) rotate(-15)" y="5.300" font-size="15" textLength="60" lengthAdjust="spacingAndGlyphs">Young St</text>
   <text transform="translate(793.500,416) rotate(-15)" y="5.300" font-size="15" textLength="60" lengthAdjust="spacingAndGlyphs">Young St</text>
   <text transform="translate(654,522) rotate(73)" y="4.600" font-size="13" textLength="60" lengthAdjust="spacingAndGlyphs">S Akard St</text>
   <text transform="translate(550,537.500) rotate(33)" y="4.600" font-size="13" textLength="57" lengthAdjust="spacingAndGlyphs">Marilla St</text>
   <text transform="translate(982.500,475) rotate(-15)" y="4.600" font-size="13.500" textLength="54" lengthAdjust="spacingAndGlyphs">Marilla St</text>
   <text transform="translate(1091,444.500) rotate(-15)" y="4.600" font-size="13.500" textLength="54" lengthAdjust="spacingAndGlyphs">Marilla St</text>
   <text transform="translate(947.200,555.600) rotate(49)" y="4.600" font-size="13" textLength="56" lengthAdjust="spacingAndGlyphs">S Ervay St</text>
   <text transform="translate(917.800,613.800) rotate(75)" y="4.600" font-size="13" textLength="60" lengthAdjust="spacingAndGlyphs">Browder St</text>
   <text transform="translate(1040.700,549) rotate(-44)" y="5.300" font-size="15.500" textLength="66" lengthAdjust="spacingAndGlyphs">Canton St</text>
   <text transform="translate(954.500,635.500) rotate(-43)" y="5.300" font-size="15.500" textLength="66" lengthAdjust="spacingAndGlyphs">Canton St</text>
  </g>
  <text transform="translate(848.700,513.200) rotate(-15)" y="4.600" font-size="13" textLength="52" lengthAdjust="spacingAndGlyphs" fill="#5f6368" stroke="#e7f3ea" stroke-width="2.400" paint-order="stroke" text-anchor="middle">Marilla St</text>
  <!-- POI labels -->
  <g stroke="#fff" stroke-width="2.600" paint-order="stroke" stroke-linejoin="round" font-size="14.500">
   <g fill="#5b7282">
    <text x="570.400" y="420.300" textLength="66.500" lengthAdjust="spacingAndGlyphs">Employers</text>
    <text x="570.400" y="435" textLength="109" lengthAdjust="spacingAndGlyphs">Casualty Building</text>
    <text x="767.700" y="573.400" font-size="15" textLength="95" lengthAdjust="spacingAndGlyphs">Dallas City Hall</text>
   </g>
   <g fill="#188038">
    <text x="509.800" y="458" textLength="89.500" lengthAdjust="spacingAndGlyphs">Marilla, Akard,</text>
    <text x="509.800" y="472" textLength="95" lengthAdjust="spacingAndGlyphs">Young Triangle</text>
    <text x="556.400" y="504.300" textLength="82" lengthAdjust="spacingAndGlyphs">Dallas Police</text>
    <text x="567.500" y="518.300" textLength="59" lengthAdjust="spacingAndGlyphs">Memorial</text>
    <text x="725" y="496.300" font-size="15" textLength="82" lengthAdjust="spacingAndGlyphs">Akard Plaza</text>
    <text x="476" y="606.800" textLength="146.500" lengthAdjust="spacingAndGlyphs">Pioneer Park Cemetery</text>
   </g>
   <text x="878.500" y="453.700" font-size="15" fill="#e0316a" textLength="144" lengthAdjust="spacingAndGlyphs">Sonder Butler Brothers</text>
  </g>
  <!-- bus icons -->
  <use href="#bus" x="613.400" y="470.100"/><use href="#bus" x="614.900" y="558.900"/><use href="#bus" x="917.800" y="506.300"/><use href="#bus" x="1045.400" y="438"/><use href="#bus" x="1003.400" y="604.200"/>
  <!-- POI pins -->
  <g transform="translate(556.700,417.600)"><use href="#pin" fill="#78909c"/><path d="M0-5.200l5 2.600v1h-10v-1zM-3.600-.700h1.700v3.600h-1.700zm2.750 0h1.700v3.600h-1.700zm2.750 0h1.700v3.600h-1.700zM-4.800 3.600h9.600v1.200h-9.600z" fill="#fff"/></g>
  <g transform="translate(790.800,538.700)"><use href="#pin" fill="#78909c"/><path d="M0-5.200l5 2.600v1h-10v-1zM-3.600-.700h1.700v3.600h-1.700zm2.750 0h1.700v3.600h-1.700zm2.750 0h1.700v3.600h-1.700zM-4.800 3.600h9.600v1.200h-9.600z" fill="#fff"/></g>
  <g transform="translate(532.600,488.200)"><use href="#pin" fill="#34a853"/><path d="M0-6.200l3 3.800h-1.400l2.600 3.300h-1.500l2.700 3.300h-4.500v2h-1.800v-2h-4.500l2.700-3.300h-1.500l2.600-3.300h-1.400z" fill="#fff"/></g>
  <g transform="translate(777.600,461)"><use href="#pin" fill="#34a853"/><path d="M0-6.200l3 3.800h-1.400l2.600 3.300h-1.500l2.700 3.300h-4.500v2h-1.800v-2h-4.500l2.700-3.300h-1.500l2.600-3.300h-1.400z" fill="#fff"/></g>
  <g transform="translate(500.500,571.800)"><use href="#pin" fill="#34a853"/><path d="M-2.200-6l2.200 3h-1l2 2.600h-1.200l2 2.600h-3.200v1.600h5.600v1.300h-9.600v-1.300h2.400v-1.600h-2.200l2-2.600h-1.200l2-2.600h-1z" fill="#fff"/></g>
  <g transform="translate(902,418.300)"><use href="#pin" fill="#f06292"/><path d="M-5.400-3.400h1.300v3.400h3v-2.600h4.300c1.200 0 2.200 1 2.200 2.200v4h-1.300v-1.700h-8.200v1.700h-1.300zm3.100.9a1.200 1.200 0 1 0 0 2.400 1.200 1.200 0 0 0 0-2.400z" fill="#fff" fill-rule="evenodd"/></g>
  <g transform="translate(1078.200,574.800)"><use href="#pin" fill="#7986cb"/><text x="0" y="4.600" font-size="13" font-weight="700" fill="#fff" text-anchor="middle">P</text></g>
  <!-- red marker -->
  <path d="M799.800 527.400c-1.600-7.800-13.200-12.600-13.200-24.600a13.200 13.200 0 0 1 26.400 0c0 12-11.600 16.800-13.200 24.600z" fill="#ea4335" stroke="#c5221f" stroke-width=".6"/>
  <circle cx="799.800" cy="502.400" r="5.100" fill="#b31412"/>
  <!-- google logo & attribution -->
  <text x="497.500" y="649.300" font-size="19.500" textLength="56" lengthAdjust="spacingAndGlyphs" fill="#fff" stroke="#fff" stroke-width="2.400" stroke-linejoin="round">Google</text>
  <text x="497.500" y="649.300" font-size="19.500" textLength="56" lengthAdjust="spacingAndGlyphs" stroke-width=".55"><tspan fill="#4285f4" stroke="#4285f4">G</tspan><tspan fill="#ea4335" stroke="#ea4335">o</tspan><tspan fill="#fbbc05" stroke="#fbbc05">o</tspan><tspan fill="#4285f4" stroke="#4285f4">g</tspan><tspan fill="#34a853" stroke="#34a853">l</tspan><tspan fill="#ea4335" stroke="#ea4335">e</tspan></text>
  <text x="984.700" y="652.200" font-size="11" fill="#3c4043" textLength="120.700" lengthAdjust="spacingAndGlyphs" stroke="#f8f9fa" stroke-width="2" paint-order="stroke">Map data ©2023 Google</text>
 </g>
</svg>
<!-- right panel rows -->
<div class="a" style="left:1460px;top:165px;width:460px;height:1px;background:#dde5f0"></div>
<div class="a" style="left:1460px;top:221.500px;width:460px;height:1px;background:#dde5f0"></div>
<div class="a" style="left:1460px;top:277.500px;width:460px;height:1px;background:#dde5f0"></div>
<div class="a" style="left:1460px;top:278.500px;width:460px;height:314px;background:#f8fafc"></div>
<div class="a" style="left:1460px;top:592.500px;width:460px;height:1px;background:#dde5f0"></div>
<div class="a" style="left:1460px;top:649px;width:460px;height:1px;background:#dde5f0"></div>
<div class="a" style="left:1460px;top:705px;width:460px;height:1px;background:#dde5f0"></div>
<div class="a" style="left:1460px;top:761px;width:460px;height:1px;background:#dde5f0"></div>
<svg class="a" style="left:1840px;top:110px" width="80" height="660" viewBox="1840 110 80 660" fill="none" stroke="#1e293b" stroke-linecap="round" stroke-linejoin="round">
 <path d="M1859.300 131.5v13M1852.800 138.0h13M1859.300 187.5v13M1852.800 194.0h13M1859.300 243.5v13M1852.800 250.0h13M1859.300 615.0v13M1852.800 621.5h13M1859.300 671.0v13M1852.800 677.5h13M1859.300 727.0v13M1852.800 733.5h13" stroke-width="1.500"/>
 <path d="M1892.400 138.2l5.600 5.600 5.600-5.600M1892.400 194.2l5.600 5.600 5.600-5.600M1892.400 251.4l5.600-5.600 5.600 5.600M1892.400 621.7l5.600 5.600 5.600-5.600M1892.400 677.7l5.600 5.600 5.600-5.600M1892.400 733.7l5.600 5.600 5.600-5.600" stroke-width="1.900"/>
</svg>
<!-- quote card 1 -->
<div class="a qc" style="left:1476px;top:289px;width:417px;height:137.800px"><div class="qf" style="top:96px;height:39px"></div></div>
<div class="a qc" style="left:1476px;top:439px;width:417px;height:137.800px"><div class="qf" style="top:96px;height:39px"></div></div>
<!-- badges -->
<div class="a" style="left:1793px;top:302px;width:82px;height:32px;border-radius:4px;background:#e5e7eb;border:1px solid #374151"></div>
<div class="a" style="left:1789px;top:452px;width:86px;height:32px;border-radius:4px;background:#fde2e1;border:1px solid #dc2626"></div>
<!-- avatars -->
<div class="a" style="left:1497px;top:349px;width:27px;height:27px;border-radius:50%;background:#e2e8f0"></div>
<svg class="a" style="left:1502px;top:353px" width="17" height="19" viewBox="0 0 17 19" fill="none" stroke="#64748b" stroke-width="1.700" stroke-linecap="round" stroke-linejoin="round"><circle cx="8.500" cy="5.700" r="3.100"/><path d="M3.300 16.600v-1.800c0-2 1.600-3.400 3.400-3.400h3.600c1.800 0 3.400 1.400 3.400 3.400v1.800"/></svg>
<div class="a" style="left:1497px;top:498px;width:27px;height:27px;border-radius:50%;background:#e2e8f0"></div>
<svg class="a" style="left:1501px;top:503px" width="19" height="18" viewBox="0 0 19 18" fill="none" stroke="#64748b" stroke-width="1.600" stroke-linecap="round" stroke-linejoin="round">
 <circle cx="9.500" cy="8.600" r=".5" fill="#64748b"/>
 <path d="M3.400 4.600h12.200c.900 0 1.600.700 1.600 1.600v7.600c0 .900-.700 1.600-1.600 1.600H3.400c-.900 0-1.600-.700-1.600-1.600V6.200c0-.900.700-1.600 1.600-1.600zM6.400 4.400V3.200c0-.700.600-1.300 1.300-1.300h3.600c.700 0 1.300.600 1.300 1.300v1.200M2 9.400c2.300 1 4.900 1.500 7.500 1.500s5.200-.500 7.500-1.500"/>
</svg>
<!-- scrollbar -->
<div class="a" style="left:1910px;top:278.800px;width:8.600px;height:128.500px;border-radius:4.300px;background:#b5b6bb"></div>

<!-- text -->
<span class="t" style="left:203px;top:21.00px;font-size:14.94px;font-weight:400;color:#334155;letter-spacing:-0.195px;-webkit-text-stroke:.22px #334155;">New</span>
<span class="t" style="left:904px;top:18.00px;font-size:16.48px;font-weight:400;color:#94a3b8;letter-spacing:-0.237px;-webkit-text-stroke:.22px #94a3b8;">Search</span>
<span class="t" style="left:1834px;top:10.00px;font-size:10.81px;font-weight:700;color:#fff;">5</span>
<span class="t" style="left:97px;top:73.00px;font-size:18.54px;font-weight:400;color:#475569;letter-spacing:0.055px;-webkit-text-stroke:.22px #475569;">Organizations</span>
<span class="t" style="left:268px;top:73.00px;font-size:18.54px;font-weight:400;color:#334155;letter-spacing:-0.131px;-webkit-text-stroke:.22px #334155;">RIO Enterprises</span>
<span class="t" style="left:1768px;top:74.00px;font-size:15.45px;font-weight:400;color:#1e293b;letter-spacing:-0.021px;-webkit-text-stroke:.22px #1e293b;">More Actions</span>
<span class="t" style="left:196px;top:146.00px;font-size:20.6px;font-weight:700;color:#0f172a;letter-spacing:-0.475px;">RIO Enterprises</span>
<span class="t" style="left:196px;top:179.00px;font-size:14.94px;font-weight:400;color:#475569;letter-spacing:-0.153px;-webkit-text-stroke:.22px #475569;">TX, USA, Dallas , Texas , United</span>
<span class="t" style="left:196px;top:200.00px;font-size:14.94px;font-weight:400;color:#475569;letter-spacing:-0.231px;-webkit-text-stroke:.22px #475569;">States, 122015</span>
<span class="t" style="left:142.5px;top:310.00px;font-size:13.91px;font-weight:400;color:#1e293b;letter-spacing:-0.333px;-webkit-text-stroke:.22px #1e293b;">Mail</span>
<span class="t" style="left:241px;top:310.00px;font-size:13.91px;font-weight:400;color:#1e293b;letter-spacing:-0.414px;-webkit-text-stroke:.22px #1e293b;">New</span>
<span class="t" style="left:333px;top:310.00px;font-size:13.91px;font-weight:400;color:#1e293b;letter-spacing:-0.141px;-webkit-text-stroke:.22px #1e293b;">Add Note</span>
<span class="t" style="left:144px;top:387.00px;font-size:16.48px;font-weight:700;color:#0b5394;letter-spacing:-0.336px;">Details</span>
<span class="t" style="left:144px;top:456.00px;font-size:16.48px;font-weight:400;color:#334155;letter-spacing:0.117px;-webkit-text-stroke:.22px #334155;">Notes</span>
<span class="t" style="left:144px;top:520.00px;font-size:16.48px;font-weight:400;color:#334155;letter-spacing:0.404px;-webkit-text-stroke:.22px #334155;">Activity</span>
<span class="t" style="left:144px;top:590.00px;font-size:16.48px;font-weight:400;color:#334155;letter-spacing:0.234px;-webkit-text-stroke:.22px #334155;">Jobs</span>
<span class="t" style="left:395.5px;top:458.00px;font-size:13.39px;font-weight:400;color:#1e4b8f;-webkit-text-stroke:.22px #1e4b8f;">3</span>
<span class="t" style="left:391px;top:592.00px;font-size:13.39px;font-weight:400;color:#1e4b8f;letter-spacing:0.109px;-webkit-text-stroke:.22px #1e4b8f;">66</span>
<span class="t" style="left:491px;top:147.00px;font-size:18.54px;font-weight:700;color:#3f4b61;letter-spacing:-0.390px;">Primary Details</span>
<span class="t" style="left:491px;top:215.00px;font-size:14.42px;font-weight:400;color:#172033;letter-spacing:0.387px;-webkit-text-stroke:.3px #172033;">Organization Status</span>
<span class="t" style="left:502px;top:250.00px;font-size:15.45px;font-weight:400;color:#166534;letter-spacing:-0.009px;-webkit-text-stroke:.22px #166534;">Active</span>
<span class="t" style="left:810px;top:215.00px;font-size:14.42px;font-weight:400;color:#172033;letter-spacing:0.436px;-webkit-text-stroke:.3px #172033;">Created At</span>
<span class="t" style="left:810px;top:244.00px;font-size:16.48px;font-weight:400;color:#475569;letter-spacing:0.219px;-webkit-text-stroke:.22px #475569;">20/03/2023 15:51</span>
<span class="t" style="left:1129px;top:215.00px;font-size:14.42px;font-weight:400;color:#172033;letter-spacing:0.269px;-webkit-text-stroke:.3px #172033;">Created By</span>
<span class="t" style="left:1129px;top:244.00px;font-size:16.48px;font-weight:400;color:#475569;letter-spacing:0.000px;-webkit-text-stroke:.22px #475569;">John Mc Keever</span>
<span class="t" style="left:491px;top:343.00px;font-size:18.54px;font-weight:700;color:#3f4b61;letter-spacing:-0.526px;">Address</span>
<span class="t" style="left:1124px;top:399.00px;font-size:16.48px;font-weight:400;color:#172033;letter-spacing:0.250px;-webkit-text-stroke:.3px #172033;">Service Address</span>
<span class="t" style="left:1124px;top:429.00px;font-size:16.48px;font-weight:400;color:#475569;letter-spacing:-0.520px;-webkit-text-stroke:.22px #475569;">TX, USA,</span>
<span class="t" style="left:1124px;top:453.00px;font-size:16.48px;font-weight:400;color:#475569;letter-spacing:-0.082px;-webkit-text-stroke:.22px #475569;">Dallas , Texas - 122015</span>
<span class="t" style="left:1124px;top:506.00px;font-size:16.48px;font-weight:400;color:#172033;letter-spacing:0.212px;-webkit-text-stroke:.3px #172033;">Billing Address</span>
<span class="t" style="left:1124px;top:535.00px;font-size:16.48px;font-weight:400;color:#475569;letter-spacing:-0.520px;-webkit-text-stroke:.22px #475569;">TX, USA,</span>
<span class="t" style="left:1124px;top:559.00px;font-size:16.48px;font-weight:400;color:#475569;letter-spacing:-0.082px;-webkit-text-stroke:.22px #475569;">Dallas , Texas - 122015</span>
<span class="t" style="left:491px;top:731.00px;font-size:18.54px;font-weight:700;color:#3f4b61;letter-spacing:-0.279px;">Other Details</span>
<span class="t" style="left:491px;top:799.00px;font-size:14.42px;font-weight:400;color:#172033;letter-spacing:0.243px;-webkit-text-stroke:.3px #172033;">Organization ID</span>
<span class="t" style="left:491px;top:829.00px;font-size:16.48px;font-weight:400;color:#172033;letter-spacing:-1.010px;-webkit-text-stroke:.22px #172033;">RI9D</span>
<span class="t" style="left:1476px;top:129.00px;font-size:15.45px;font-weight:400;color:#172033;letter-spacing:0.228px;-webkit-text-stroke:.22px #172033;">Customers Associated (3)</span>
<span class="t" style="left:1476px;top:185.00px;font-size:15.45px;font-weight:400;color:#172033;letter-spacing:0.230px;-webkit-text-stroke:.22px #172033;">Properties Associated (2)</span>
<span class="t" style="left:1476px;top:241.00px;font-size:15.45px;font-weight:400;color:#334155;letter-spacing:0.205px;-webkit-text-stroke:.22px #334155;">Quotes Associated (9)</span>
<span class="t" style="left:1476px;top:612.00px;font-size:15.45px;font-weight:400;color:#172033;letter-spacing:0.203px;-webkit-text-stroke:.22px #172033;">Invoices Associated (26)</span>
<span class="t" style="left:1476px;top:668.00px;font-size:15.45px;font-weight:400;color:#172033;letter-spacing:0.275px;-webkit-text-stroke:.22px #172033;">Contracts Associated (2)</span>
<span class="t" style="left:1476px;top:724.00px;font-size:15.45px;font-weight:400;color:#172033;letter-spacing:0.228px;-webkit-text-stroke:.22px #172033;">Assets Associated (8)</span>
<span class="t" style="left:1495px;top:313.00px;font-size:15.45px;font-weight:700;color:#1e293b;letter-spacing:-0.465px;">#Q170</span>
<span class="t" style="left:1804px;top:311.00px;font-size:15.45px;font-weight:400;color:#374151;letter-spacing:-0.009px;-webkit-text-stroke:.22px #374151;">Archived</span>
<span class="t" style="left:1536px;top:355.00px;font-size:15.45px;font-weight:400;color:#64748b;letter-spacing:-0.180px;-webkit-text-stroke:.22px #64748b;">Chris Harris</span>
<span class="t" style="left:1487px;top:398.00px;font-size:15.45px;font-weight:400;color:#ef4444;letter-spacing:-0.189px;-webkit-text-stroke:.22px #ef4444;">Expired On 13/10/2023</span>
<span class="t" style="left:1815px;top:398.00px;font-size:15.45px;font-weight:400;color:#64748b;letter-spacing:-0.211px;-webkit-text-stroke:.22px #64748b;">$3,837.24</span>
<span class="t" style="left:1495px;top:462.00px;font-size:15.45px;font-weight:700;color:#1e293b;letter-spacing:-0.340px;">#Q158</span>
<span class="t" style="left:1800px;top:461.00px;font-size:15.45px;font-weight:400;color:#b91c1c;letter-spacing:-0.248px;-webkit-text-stroke:.22px #b91c1c;">Canceled</span>
<span class="t" style="left:1536px;top:504.00px;font-size:15.45px;font-weight:400;color:#64748b;letter-spacing:-0.081px;-webkit-text-stroke:.22px #64748b;">Job - #A12345190 - AC Service</span>
<span class="t" style="left:1487px;top:548.00px;font-size:15.45px;font-weight:400;color:#ef4444;letter-spacing:-0.069px;-webkit-text-stroke:.22px #ef4444;">Expired On 22/09/2023</span>
<span class="t" style="left:1817px;top:548.00px;font-size:15.45px;font-weight:400;color:#64748b;letter-spacing:-0.461px;-webkit-text-stroke:.22px #64748b;">$1,441.00</span><!-- highlight boxes -->
<div class="a" style="left:1840.300px;top:233px;width:32.500px;height:36.800px;border:4px solid #ef3b3b;border-radius:6.500px;box-shadow:0 1px 2px rgba(0,0,0,.35)"></div>
<div class="a" style="left:1463px;top:285px;width:450.700px;height:306px;border:4px solid #ef3b3b;border-radius:4px;box-shadow:0 1.500px 2px rgba(0,0,0,.5)"></div>
<!-- view all -->
<div class="a" style="left:1615px;top:548px;width:150px;height:35px;border-radius:18px;background:#e04a17;box-shadow:0 1px 10px rgba(0,0,0,.4),0 2px 4px rgba(0,0,0,.3)"></div>

<span class="t" style="left:1631px;top:556.00px;font-size:16.48px;font-weight:700;color:#fff;letter-spacing:-0.362px;">View All Quotes</span>
</body></html>
